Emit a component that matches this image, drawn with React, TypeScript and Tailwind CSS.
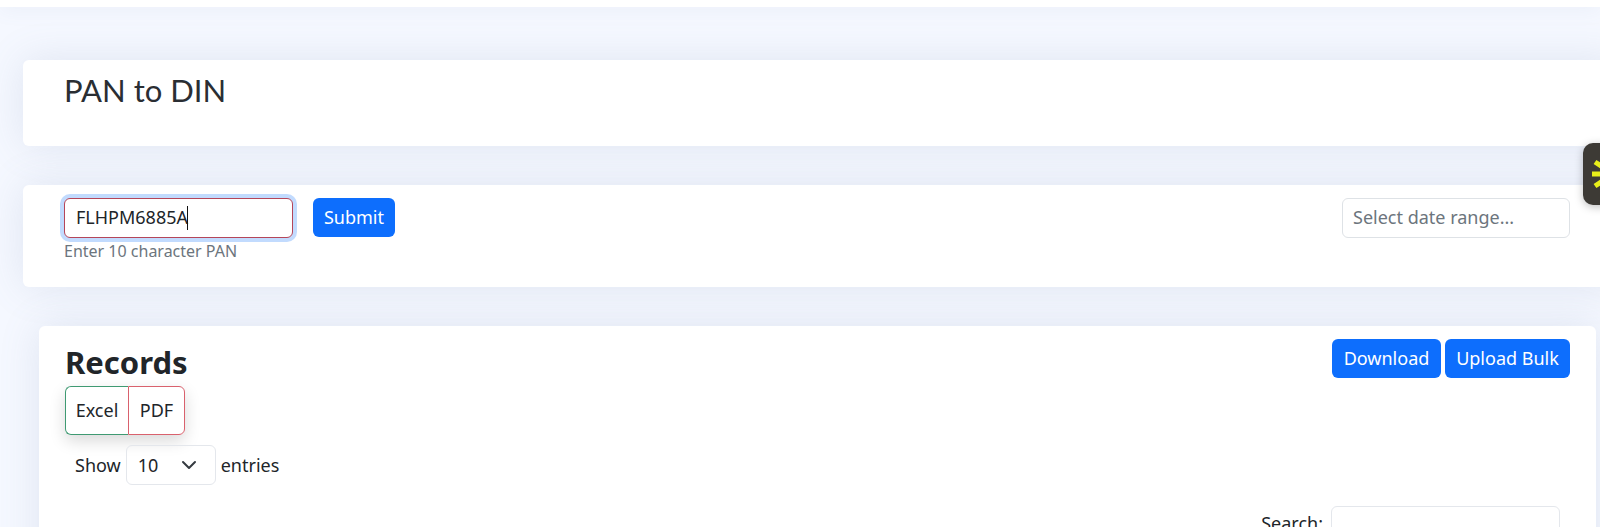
const App = () => {
  return (
    <div className="relative h-[527px] w-[1600px] overflow-hidden bg-[#f5f8ff] font-['Noto_Sans','Open_Sans',sans-serif] text-[18px] text-[#212529]">
      <div className="h-[7px] bg-white shadow-[0_0_20px_rgba(110,130,170,0.15)]" />

      <div className="ml-[23px] mr-[-20px] mt-[53px] h-[86px] rounded-[6px] bg-white pl-[41px] pt-[12px] shadow-[0_0_40px_rgba(110,130,170,0.16)]">
        <h2 className="font-['Lato',sans-serif] text-[31px] leading-[37px] text-[#2a2e33]">PAN to DIN</h2>
      </div>

      <div className="ml-[23px] mr-[-20px] mt-[39px] flex h-[102px] justify-between rounded-[6px] bg-white pl-[41px] pr-[50px] pt-[13px] shadow-[0_0_40px_rgba(110,130,170,0.16)]">
        <div>
          <div className="flex items-start">
            <div className="flex h-[40px] w-[229px] items-center rounded-[6px] border border-[#b5465a] bg-white pb-[1px] pl-[11px] shadow-[0_0_0_4px_rgba(13,110,253,0.25)]">
              <span>FLHPM6885A</span>
              <span className="ml-[-1px] h-[24px] w-[1px] bg-[#111]" />
            </div>
            <button className="ml-[20px] h-[39px] w-[82px] rounded-[6px] bg-[#0d6efd] text-white">Submit</button>
          </div>
          <p className="mt-[1px] text-[16px] leading-[24px] text-[#6c757d]">Enter 10 character PAN</p>
        </div>
        <div className="flex h-[40px] w-[228px] items-center rounded-[6px] border border-[#dee2e6] pb-[2px] pl-[10px] text-[#6c757d]">
          Select date range...
        </div>
      </div>

      <div className="ml-[39px] mr-[4px] mt-[39px] h-[300px] rounded-[6px] bg-white pl-[26px] pr-[26px] pt-[13px] shadow-[0_0_40px_rgba(110,130,170,0.16)]">
        <div className="flex items-start justify-between">
          <h3 className="mt-[5px] text-[31px] font-bold leading-[37px]">Records</h3>
          <div className="flex gap-[4px]">
            <button className="h-[39px] w-[109px] rounded-[6px] bg-[#0d6efd] text-white">Download</button>
            <button className="h-[39px] w-[125px] rounded-[6px] bg-[#0d6efd] text-white">Upload Bulk</button>
          </div>
        </div>
        <div className="mt-[5px] flex h-[49px] w-[120px] rounded-[6px] shadow-[0_6px_16px_rgba(0,0,0,0.15)]">
          <button className="w-[63px] rounded-l-[6px] border border-r-0 border-[#3f9a72] bg-white">Excel</button>
          <button className="w-[57px] rounded-r-[6px] border border-[#d9616d] bg-white">PDF</button>
        </div>
        <div className="mt-[10px] flex items-center pl-[10px]">
          <span>Show</span>
          <div className="mx-[5px] flex h-[40px] w-[90px] items-center justify-between rounded-[6px] border border-[#e4e7ec] pl-[11px] pr-[18px]">
            <span>10</span>
            <svg width="16" height="16" viewBox="0 0 16 16" fill="none" stroke="#343a40" strokeWidth="2" strokeLinecap="round" strokeLinejoin="round">
              <path d="M2 5l6 6 6-6" />
            </svg>
          </div>
          <span>entries</span>
        </div>
        <div className="mt-[21px] flex items-start justify-end pr-[10px]">
          <span className="mt-[4px]">Search:</span>
          <div className="ml-[8px] h-[40px] w-[229px] rounded-[6px] border border-[#e4e7ec]" />
        </div>
      </div>

      <div className="absolute left-[1583px] top-[143px] h-[62px] w-[30px] overflow-hidden rounded-l-[10px] bg-[#3d3a35] shadow-[0_2px_8px_rgba(0,0,0,0.25)]">
        <svg width="30" height="62" viewBox="0 0 30 62" stroke="#e8ee1a" strokeWidth="5" fill="none">
          <path d="M9 31H24M12 19l9 6M12 43l9-6" />
        </svg>
      </div>
    </div>
  );
};

export default App;
